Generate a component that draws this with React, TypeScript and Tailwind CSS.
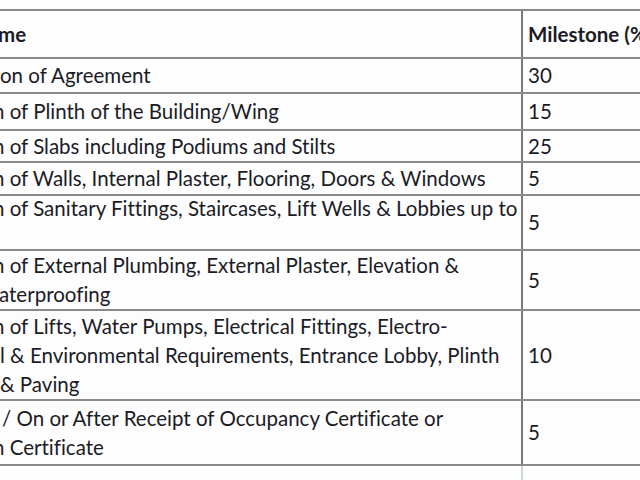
import React from "react";

type Row = { h: string; left: { t: string; cls: string }[]; right: string; bold?: boolean };

const rows: Row[] = [
  { h: "h-[48px]", left: [{ t: "me", cls: "-ml-[2px]" }], right: "Milestone (%)", bold: true },
  { h: "h-[35px]", left: [{ t: "on of Agreement", cls: "ml-0" }], right: "30" },
  { h: "h-[37px]", left: [{ t: "n of Plinth of the Building/Wing", cls: "-ml-[7px]" }], right: "15" },
  { h: "h-[32px]", left: [{ t: "n of Slabs including Podiums and Stilts", cls: "-ml-[7px]" }], right: "25" },
  { h: "h-[33px]", left: [{ t: "n of Walls, Internal Plaster, Flooring, Doors & Windows", cls: "-ml-[7px]" }], right: "5" },
  {
    h: "h-[55px]",
    left: [
      { t: "n of Sanitary Fittings, Staircases, Lift Wells & Lobbies up to", cls: "-ml-[7px]" },
      { t: "\u00a0", cls: "" },
    ],
    right: "5",
  },
  {
    h: "h-[60px]",
    left: [
      { t: "n of External Plumbing, External Plaster, Elevation &", cls: "-ml-[7px]" },
      { t: "aterproofing", cls: "-ml-[1px]" },
    ],
    right: "5",
  },
  {
    h: "h-[90px]",
    left: [
      { t: "n of Lifts, Water Pumps, Electrical Fittings, Electro-", cls: "-ml-[7px]" },
      { t: "l & Environmental Requirements, Entrance Lobby, Plinth", cls: "ml-0" },
      { t: "& Paving", cls: "ml-0" },
    ],
    right: "10",
  },
  {
    h: "h-[65px]",
    left: [
      { t: "/ On or After Receipt of Occupancy Certificate or", cls: "ml-[2px]" },
      { t: "n Certificate", cls: "-ml-[7px]" },
    ],
    right: "5",
  },
];

export default function App() {
  return (
    <div
      className="w-[640px] h-[480px] overflow-hidden bg-[#fdfdfd] text-[#1b1b26] pt-[9px] [font-variant-ligatures:none]"
      style={{ fontFamily: "Lato, 'Open Sans', sans-serif" }}
    >
      <div className="w-[700px] border-t-2 border-[#8a8a8a]">
        {rows.map((r, i) => (
          <div key={i} className={`flex ${r.h} border-b-2 border-[#8a8a8a]`}>
            <div className="w-[523px] shrink-0 border-r-2 border-[#7a7a7a] flex flex-col justify-center overflow-hidden">
              {r.left.map((l, j) => (
                <div
                  key={j}
                  className={`${l.cls} whitespace-nowrap text-[20.5px] leading-[29px] ${r.bold ? "font-bold" : ""}`}
                >
                  {l.t}
                </div>
              ))}
            </div>
            <div
              className={`flex-1 flex items-center pl-[5px] whitespace-nowrap text-[20.5px] leading-[29px] ${r.bold ? "font-bold" : ""}`}
            >
              {r.right}
            </div>
          </div>
        ))}
        <div className="flex h-[20px]">
          <div className="w-[523px] shrink-0 border-r-2 border-[#c8d8e0]" />
          <div className="flex-1" />
        </div>
      </div>
    </div>
  );
}
